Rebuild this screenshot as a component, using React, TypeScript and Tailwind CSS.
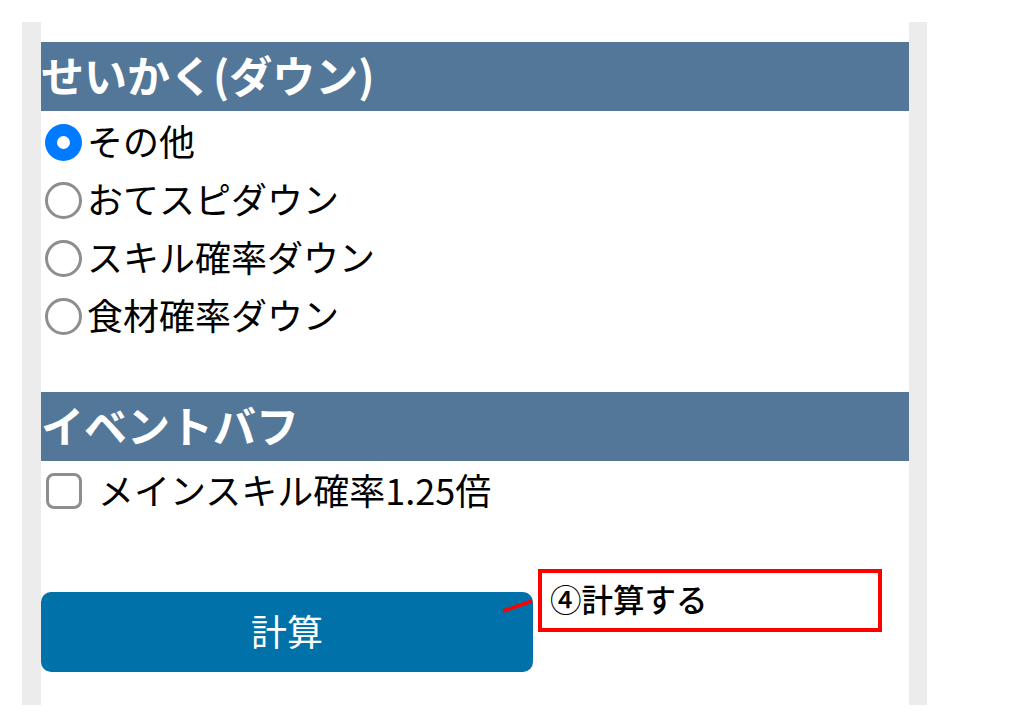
import { useState } from 'react';

const jp = '[font-family:"Noto_Sans_CJK_JP","Noto_Sans",sans-serif]';

const natures = ['その他', 'おてスピダウン', 'スキル確率ダウン', '食材確率ダウン'];

function Radio({ checked }: { checked: boolean }) {
    return checked ? (
        <span className="flex h-[37px] w-[37px] shrink-0 items-center justify-center rounded-full bg-[#007aff]">
            <span className="h-[13px] w-[13px] rounded-full bg-white" />
        </span>
    ) : (
        <span className="h-[37px] w-[37px] shrink-0 rounded-full border-[3px] border-[#8e8e8e] bg-white" />
    );
}

export default function App() {
    const [nature, setNature] = useState(0);
    const [eventBuff, setEventBuff] = useState(false);

    return (
        <div className={`relative h-[713px] w-[1019px] overflow-hidden bg-white text-black ${jp}`}>
            <div className="ml-[22px] mt-[22px] h-[683px] w-[905px] bg-[#ececec] pl-[19px] pr-[18px]">
                <div className="h-full bg-white pt-[20px]">
                    <h2 className="flex h-[69px] items-center bg-[#537799] text-[43px] font-bold leading-none text-white">
                        <span className="-translate-y-[2px]">せいかく(ダウン)</span>
                    </h2>

                    <div className="pt-[2px]">
                        {natures.map((label, i) => (
                            <label
                                key={label}
                                onClick={() => setNature(i)}
                                className="flex h-[58px] cursor-pointer items-center gap-[5px] pl-[4px] text-[36px] leading-none"
                            >
                                <Radio checked={nature === i} />
                                <span className="-translate-y-[2px]">{label}</span>
                            </label>
                        ))}
                    </div>

                    <h2 className="mt-[47px] flex h-[69px] items-center bg-[#537799] text-[43px] font-bold leading-none text-white">
                        <span className="-translate-y-[2px]">イベントバフ</span>
                    </h2>

                    <label
                        onClick={() => setEventBuff(!eventBuff)}
                        className="flex h-[60px] cursor-pointer items-center gap-[16px] pl-[5px] text-[36px] leading-none"
                    >
                        <span className="flex h-[36px] w-[36px] shrink-0 items-center justify-center rounded-[8px] border-[3px] border-[#8e8e8e] bg-white">
                            {eventBuff && <span className="h-[16px] w-[16px] rounded-[3px] bg-[#007aff]" />}
                        </span>
                        <span className="-translate-y-[2px]">メインスキル確率1.25倍</span>
                    </label>

                    <button className="mt-[71px] flex h-[80px] w-[492px] items-center justify-center rounded-[10px] bg-[#0072a9] text-[36px] text-white">
                        <span className="-translate-y-[2px]">計算</span>
                    </button>
                </div>
            </div>

            {/* annotation overlay */}
            <div className="absolute left-[538px] top-[569px] flex h-[63px] w-[344px] items-center border-[4px] border-[#ff0000] bg-white pl-[8px] text-[31.5px] font-medium leading-none text-black">
                <span className="-translate-y-[2px]">④計算する</span>
            </div>
            <svg className="absolute left-[500px] top-[596px]" width="36" height="20" viewBox="0 0 36 20">
                <line x1="3" y1="15" x2="32" y2="5" stroke="#ff0000" strokeWidth="3.5" />
            </svg>
        </div>
    );
}
